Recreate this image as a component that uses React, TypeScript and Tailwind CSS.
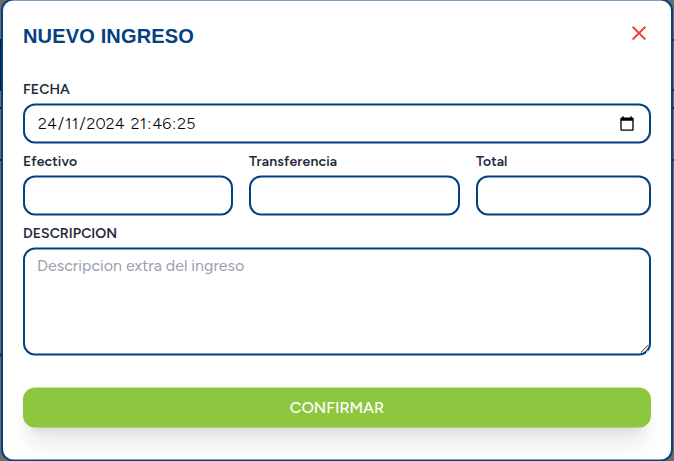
import type { ReactNode } from "react";

const field =
  "block w-full rounded-xl border-2 border-[#024182] bg-white px-3 text-base text-black outline-none";

function Label({ children, className = "" }: { children: ReactNode; className?: string }) {
  return (
    <span className={`block h-5 w-max whitespace-nowrap text-[14px] leading-5 font-semibold text-gray-800 ${className}`}>
      {children}
    </span>
  );
}

function Segment({ children }: { children: ReactNode }) {
  return <span className="px-px">{children}</span>;
}

function Backdrop() {
  return (
    <div className="absolute inset-0 bg-[#6c6c6c]">
      <div className="flex h-full flex-col">
        <div className="flex h-[52px] translate-y-[39px] justify-between border-y-2 border-[#101820]">
          <span className="w-1 bg-[#001f40]" />
        </div>
        <div className="mt-[55px] h-[52px] border-t-2 border-[#101820]" />
        <div className="h-[194px] border-t-2 border-[#101820]" />
        <div className="w-1 border-t-4 border-[#2a3038]" />
      </div>
    </div>
  );
}

export default function App() {
  return (
    <main className="relative h-[461px] w-[674px] overflow-hidden font-['Figtree','Lato',sans-serif]">
      <Backdrop />
      <section className="relative mx-auto -mt-[2px] h-[463px] w-[672px] translate-y-[0.5px] rounded-xl border-2 border-[#024182] bg-white px-5 pt-[19px]">
        <header className="flex h-[60px] items-start justify-between">
          <h1 className="font-['Liberation_Sans',sans-serif] text-xl leading-8 font-bold tracking-[0.16px] text-[#024182]">
            NUEVO INGRESO
          </h1>
          <button aria-label="Cerrar" className="mt-1 text-[#ef4444]">
            <svg width="24" height="20" viewBox="0 0 24 20" fill="none" stroke="currentColor" strokeWidth="2">
              <path d="M5.6 3.2 18.4 16M18.4 3.2 5.6 16" />
            </svg>
          </button>
        </header>
        <form>
          <Label className="tracking-[0.1px]">FECHA</Label>
          <div className={`${field} mt-1 flex h-10 items-center justify-between`}>
            <span className="font-light tracking-[0.12px]">
              <Segment>24</Segment>/<Segment>11</Segment>/<Segment>2024</Segment>{" "}
              <Segment>21</Segment>:<Segment>46</Segment>:<Segment>25</Segment>
            </span>
            <svg className="mr-[2px]" width="16" height="16" viewBox="0 0 24 24" fill="currentColor">
              <path d="M20 3h-1V1h-2v2H7V1H5v2H4c-1.1 0-2 .9-2 2v16c0 1.1.9 2 2 2h16c1.1 0 2-.9 2-2V5c0-1.1-.9-2-2-2zm0 18H4V8h16v13z" />
            </svg>
          </div>
          <div className="mt-2 grid grid-cols-[210px_211px_175px] gap-x-4">
            <div>
              <Label className="tracking-[0.1px]">Efectivo</Label>
              <input aria-label="Efectivo" className={`${field} mt-1 h-10`} />
            </div>
            <div>
              <Label className="tracking-[0.15px]">Transferencia</Label>
              <input aria-label="Transferencia" className={`${field} mt-1 h-10`} />
            </div>
            <div>
              <Label>Total</Label>
              <input aria-label="Total" className={`${field} mt-1 h-10`} />
            </div>
          </div>
          <Label className="mt-2 tracking-[0.05px]">DESCRIPCION</Label>
          <textarea
            placeholder="Descripcion extra del ingreso"
            className={`${field} mt-1 h-[108px] py-1 placeholder:text-gray-400`}
          />
          <button
            type="button"
            className="mt-8 h-10 w-full rounded-xl bg-[#8dc73f] text-base font-medium text-white shadow-xl"
          >
            CONFIRMAR
          </button>
        </form>
      </section>
    </main>
  );
}
